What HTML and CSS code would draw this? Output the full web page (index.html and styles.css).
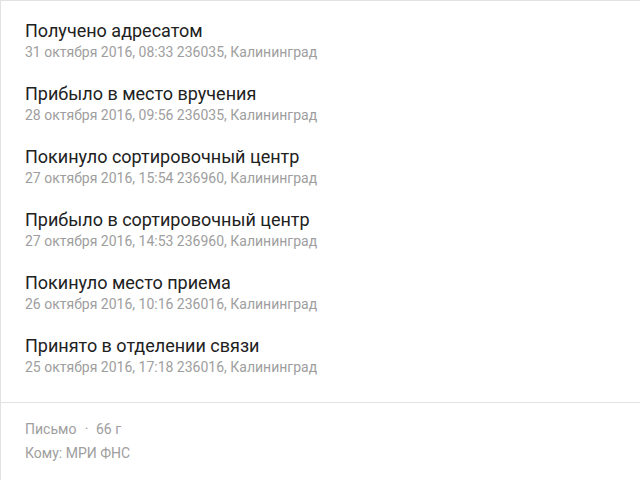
FILE: index.html
```html
<!DOCTYPE html>
<html lang="ru">
<head>
<meta charset="utf-8">
<link rel="stylesheet" href="styles.css">
</head>
<body>
<div class="card">
  <ul class="events">
    <li class="event">
      <div class="event-title">Получено адресатом</div>
      <div class="event-meta">31 октября 2016, 08:33 236035, Калининград</div>
    </li>
    <li class="event">
      <div class="event-title">Прибыло в место вручения</div>
      <div class="event-meta">28 октября 2016, 09:56 236035, Калининград</div>
    </li>
    <li class="event">
      <div class="event-title">Покинуло сортировочный центр</div>
      <div class="event-meta">27 октября 2016, 15:54 236960, Калининград</div>
    </li>
    <li class="event">
      <div class="event-title">Прибыло в сортировочный центр</div>
      <div class="event-meta">27 октября 2016, 14:53 236960, Калининград</div>
    </li>
    <li class="event">
      <div class="event-title">Покинуло место приема</div>
      <div class="event-meta">26 октября 2016, 10:16 236016, Калининград</div>
    </li>
    <li class="event">
      <div class="event-title">Принято в отделении связи</div>
      <div class="event-meta">25 октября 2016, 17:18 236016, Калининград</div>
    </li>
  </ul>
  <div class="details">
    <div class="details-line">Письмо <span class="dot">·</span> 66 г</div>
    <div class="details-line">Кому: МРИ ФНС</div>
  </div>
</div>
</body>
</html>
```
FILE: styles.css
```css
html, body {
  margin: 0;
  padding: 0;
  background: #fff;
}
body {
  font-family: Roboto, "Noto Sans", sans-serif;
}
.card {
  width: 640px;
  min-height: 480px;
  box-sizing: border-box;
  border-top: 1px solid #e2e2e2;
  border-left: 1px solid #e2e2e2;
}
.events {
  list-style: none;
  margin: 0;
  padding: 19px 0 25px 24px;
  display: flex;
  flex-direction: column;
  gap: 21px;
}
.event-title {
  font-size: 18px;
  line-height: 22px;
  color: #212121;
}
.event-meta {
  font-size: 14px;
  line-height: 20px;
  font-weight: 400;
  color: #9e9e9e;
}
.details {
  border-top: 1px solid #e2e2e2;
  padding: 14px 0 0 24px;
}
.details-line {
  font-size: 14px;
  line-height: 24px;
  color: #9e9e9e;
}
.dot {
  margin: 0 4px 0 5px;
}
```
